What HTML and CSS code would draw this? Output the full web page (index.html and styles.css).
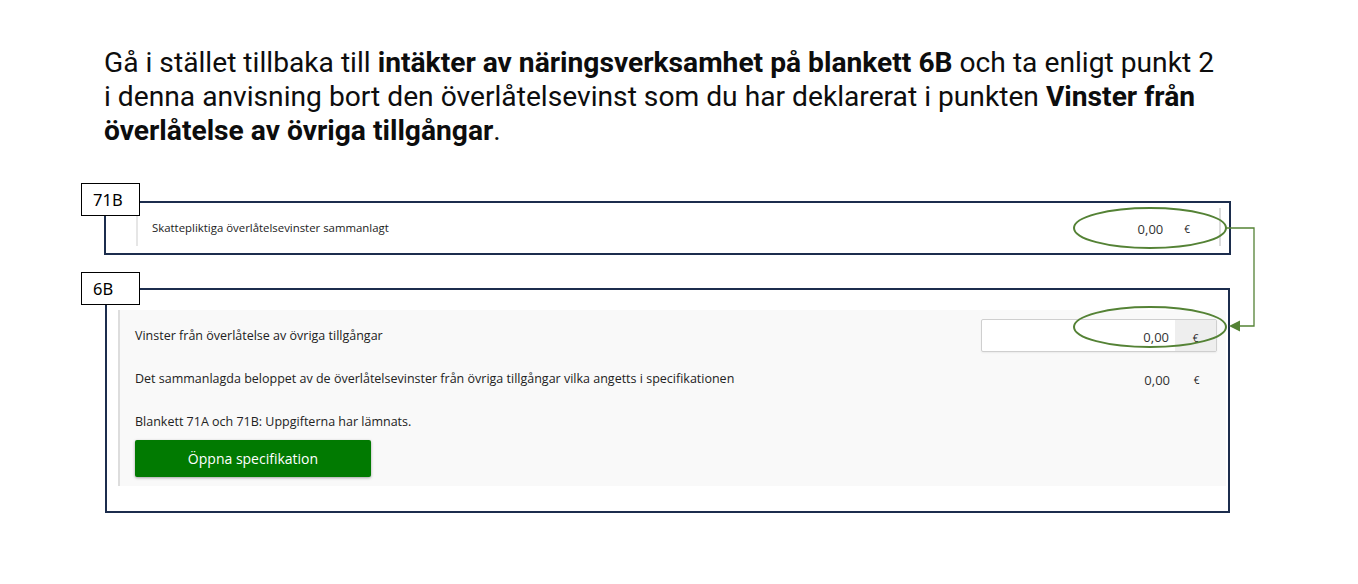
FILE: index.html
```html
<!DOCTYPE html>
<html lang="sv">
<head>
<meta charset="utf-8">
<title>Anvisning</title>
<link rel="stylesheet" href="styles.css">
</head>
<body>
<div class="page">
  <p class="intro">Gå i stället tillbaka till <b>intäkter av näringsverksamhet på blankett 6B</b> och ta enligt punkt 2<br>i denna anvisning bort den överlåtelsevinst som du har deklarerat i punkten <b>Vinster från</b><br><b>överlåtelse av övriga tillgångar</b>.</p>

  <div class="frame frame-71b">
    <div class="tag tag-71b">71B</div>
    <div class="panel-71b">
      <span class="label">Skattepliktiga överlåtelsevinster sammanlagt</span>
      <span class="amount amount-71b">0,00</span>
      <span class="euro euro-71b">€</span>
    </div>
  </div>

  <div class="frame frame-6b">
    <div class="tag tag-6b">6B</div>
    <div class="panel-6b">
      <div class="row row-input">
        <span class="label">Vinster från överlåtelse av övriga tillgångar</span>
        <div class="field">
          <span class="field-value">0,00</span>
          <span class="field-addon">€</span>
        </div>
      </div>
      <div class="row row-sum">
        <span class="label">Det sammanlagda beloppet av de överlåtelsevinster från övriga tillgångar vilka angetts i specifikationen</span>
        <div class="static">
          <span class="static-value">0,00</span>
          <span class="static-addon">€</span>
        </div>
      </div>
      <div class="row row-note">
        <span class="label">Blankett 71A och 71B: Uppgifterna har lämnats.</span>
      </div>
      <button class="btn" type="button">Öppna specifikation</button>
    </div>
  </div>

  <svg class="overlay" width="1358" height="584" viewBox="0 0 1358 584" aria-hidden="true">
    <ellipse cx="1150" cy="228" rx="76" ry="20" fill="none" stroke="#548235" stroke-width="2"/>
    <ellipse cx="1150" cy="327" rx="76" ry="20" fill="none" stroke="#548235" stroke-width="2"/>
    <polyline points="1226,228 1254,228 1254,326 1238,326" fill="none" stroke="#548235" stroke-width="1.3"/>
    <polygon points="1229,326 1240,320.5 1240,331.5" fill="#548235"/>
  </svg>
</div>
</body>
</html>
```

FILE: styles.css
```css
* { box-sizing: border-box; }

html, body {
  margin: 0;
  padding: 0;
  background: #ffffff;
}

.page {
  position: relative;
  width: 1358px;
  height: 584px;
  overflow: hidden;
  padding-top: 46px;
}

.intro {
  margin: 0 0 0 104px;
  font-family: Roboto, "Liberation Sans", sans-serif;
  font-size: 28.2px;
  line-height: 34px;
  color: #0d0d0d;
  white-space: nowrap;
}

.intro b { font-weight: 700; }

.frame {
  position: relative;
  border: 2px solid #1c2d4d;
  background: #fff;
}

.tag {
  position: absolute;
  width: 59px;
  height: 33px;
  border: 1px solid #000;
  background: #fff;
  font-family: "Noto Sans", "Open Sans", sans-serif;
  font-size: 16.5px;
  line-height: 31px;
  padding-left: 11px;
  color: #000;
  z-index: 2;
}

.frame-71b {
  margin-top: 53px;
  margin-left: 104px;
  width: 1127px;
  height: 54px;
  padding: 5px 8px 7px 30px;
}

.tag-71b { top: -20px; left: -25px; }

.panel-71b {
  display: flex;
  align-items: center;
  height: 38px;
  border-left: 2px solid #e6e6e6;
  border-right: 2px solid #dcdcdc;
  padding-left: 14px;
  padding-right: 29px;
}

.label {
  font-family: "Open Sans", "Noto Sans", sans-serif;
  font-size: 12.5px;
  color: #222;
}

.panel-71b .label { font-size: 11.4px; }

.amount {
  margin-left: auto;
  font-family: "Open Sans", "Noto Sans", sans-serif;
  font-size: 13px;
  color: #333;
  padding-top: 3px;
}

.euro {
  font-family: "Open Sans", "Noto Sans", sans-serif;
  font-size: 10px;
  color: #222;
  padding-top: 4px;
}

.euro-71b { margin-left: 21px; }

.frame-6b {
  margin-top: 33px;
  margin-left: 105px;
  width: 1125px;
  height: 225px;
  padding: 20px 2px 25px 11px;
}

.tag-6b { top: -18px; left: -26px; }

.panel-6b {
  height: 176px;
  background: #f9f9f9;
  border-left: 2px solid #dddddd;
  padding: 9px 9px 9px 15px;
  display: flex;
  flex-direction: column;
}

.row {
  display: flex;
  align-items: center;
}

.row-input { height: 33px; }
.row-sum { height: 32px; margin-top: 10px; }
.row-note { height: 26px; margin-top: 14px; }

.field, .static {
  margin-left: auto;
  width: 236px;
  height: 33px;
  display: flex;
  align-items: stretch;
}

.field {
  border: 1px solid #cfcfcf;
  border-radius: 2px;
  background: #fff;
  box-shadow: 0 1px 2px rgba(0,0,0,0.06);
}

.field-value, .static-value {
  flex: 1;
  display: flex;
  align-items: center;
  justify-content: flex-end;
  padding-right: 6px;
  padding-top: 3px;
  font-family: "Open Sans", "Noto Sans", sans-serif;
  font-size: 13px;
  color: #333;
}

.field-addon, .static-addon {
  width: 41px;
  display: flex;
  align-items: center;
  justify-content: center;
  font-family: "Open Sans", "Noto Sans", sans-serif;
  font-size: 10px;
  color: #222;
  padding-top: 4px;
}

.field-addon { background: #eeeeee; }

.btn {
  margin-top: 6px;
  width: 236px;
  height: 37px;
  border: 0;
  border-radius: 2px;
  background: #017a01;
  color: #fff;
  font-family: "Open Sans", "Noto Sans", sans-serif;
  font-size: 14px;
  box-shadow: 0 1px 3px rgba(0,0,0,0.35);
  padding: 0;
  cursor: pointer;
}

.overlay {
  position: absolute;
  left: 0;
  top: 0;
  pointer-events: none;
  z-index: 3;
}
```
